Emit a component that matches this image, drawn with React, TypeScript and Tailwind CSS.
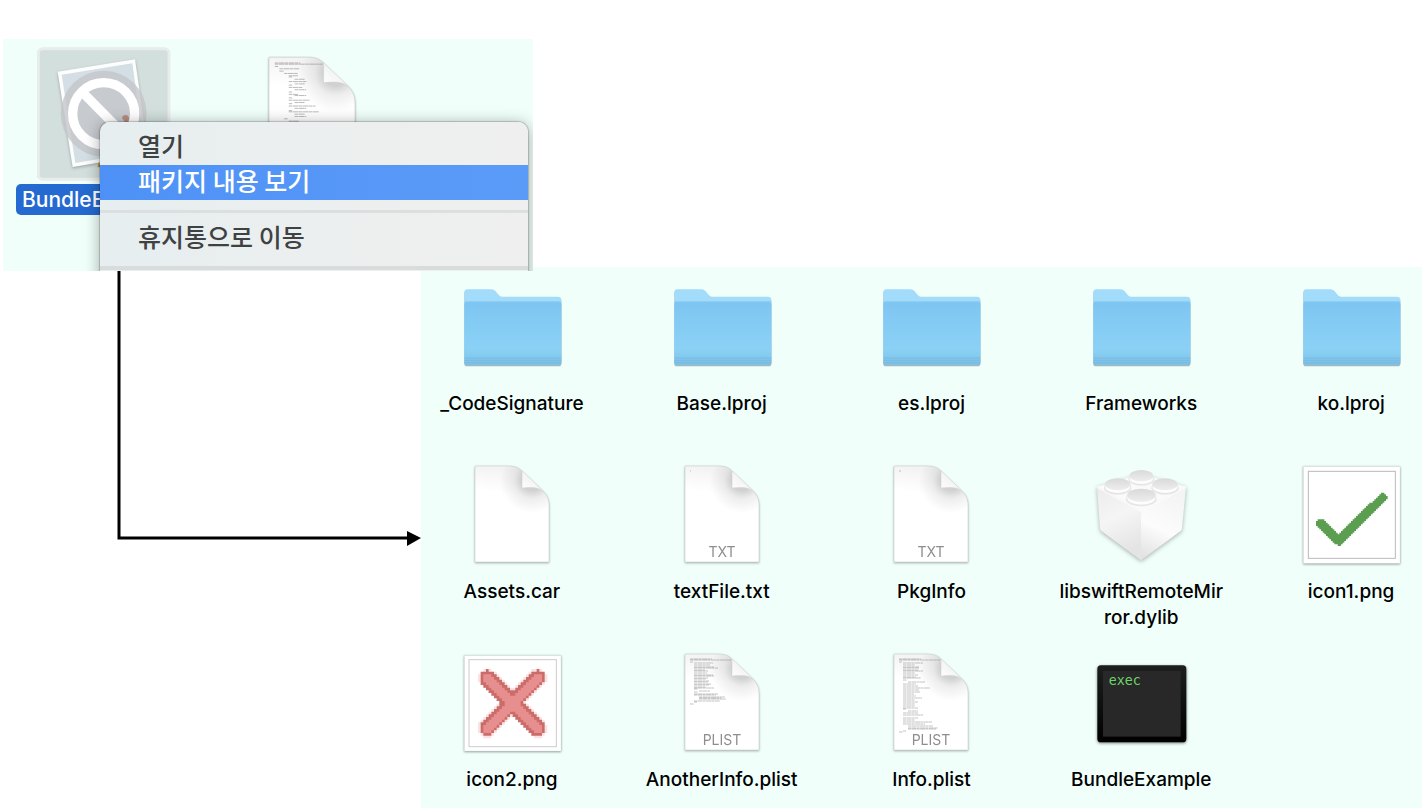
import { useId } from "react";
import type { ReactNode } from "react";

type Line = [x: number, y: number, w: number];
type Point = [x: number, y: number];

// ---- Text previews, in document units (74 x 96) ----
const HEADER: Line[] = [
  [5, 5, 22],
  [5, 6, 41],
  [5, 8, 3],
];

const ANOTHER_PLIST: Line[] = [
  ...HEADER,
  [9, 9, 19], [9, 11, 16], [9, 13, 20], [9, 14, 24], [9, 16, 11], [9, 17, 14],
  [9, 19, 13], [9, 21, 19], [9, 22, 20], [9, 24, 14], [9, 25, 12], [9, 27, 15],
  [9, 28, 14], [9, 30, 17], [9, 31, 15], [9, 33, 12], [9, 34, 20], [9, 35, 4],
  [14, 37, 11], [9, 38, 4], [9, 40, 24], [9, 41, 22], [14, 43, 26], [14, 44, 22],
  [14, 45, 27], [9, 47, 26], [9, 48, 3], [5, 50, 4],
];

const INFO_PLIST: Line[] = [
  ...HEADER,
  [9, 9, 20], [9, 11, 12], [9, 13, 16], [9, 14, 16], [9, 16, 15], [9, 17, 20],
  [9, 19, 12], [9, 21, 15], [9, 23, 13], [9, 24, 18], [9, 26, 4], [14, 28, 17],
  [9, 30, 13], [9, 32, 15], [9, 34, 27], [9, 36, 16], [9, 38, 17], [9, 40, 11],
  [9, 42, 13], [9, 44, 19], [9, 46, 12], [9, 48, 15], [9, 50, 12], [9, 52, 12],
  [9, 54, 15], [9, 55, 3], [14, 57, 10], [9, 59, 15], [9, 61, 20], [9, 64, 15],
  [9, 66, 12], [9, 68, 29], [9, 70, 22], [14, 72, 25], [14, 74, 30], [14, 75, 28],
  [9, 77, 3], [5, 78, 4],
];

const SOURCE_TEXT: Line[] = [
  ...HEADER,
  [9, 10, 17], [9, 12, 4], [13, 14, 12], [17, 16, 8], [17, 17, 3], [22, 19, 9],
  [17, 21, 15], [22, 23, 9], [17, 24, 3], [17, 26, 12], [22, 28, 10], [17, 30, 3],
  [17, 32, 8], [22, 33, 10], [17, 35, 3], [17, 37, 18], [22, 39, 9], [17, 40, 3],
  [17, 42, 23], [22, 44, 10], [17, 46, 3], [17, 47, 26], [22, 49, 9], [22, 51, 10],
  [13, 53, 3], [17, 55, 9],
];

// ---- Icons ----
function DocumentIcon({
  lines = [],
  tag,
  className = "size-[98px]",
}: {
  lines?: Line[];
  tag?: string;
  className?: string;
}) {
  const id = useId();
  const page = "M0 0H32C39 0 43 1 47 5L68 25C72 29 74 33 74 40V96H0Z";
  return (
    <svg viewBox="0 0 98 98" className={`overflow-visible ${className}`} aria-hidden="true">
      <defs>
        <linearGradient id={`${id}page`} x1="0.1" y1="0" x2="0" y2="1">
          <stop offset="0" stopColor="#f3f3f3" />
          <stop offset="0.25" stopColor="#ffffff" />
        </linearGradient>
        <radialGradient id={`${id}shade`} gradientUnits="userSpaceOnUse" cx="57" cy="15" r="32">
          <stop offset="0.3" stopColor="#000000" stopOpacity="0.17" />
          <stop offset="0.55" stopColor="#000000" stopOpacity="0.07" />
          <stop offset="1" stopColor="#000000" stopOpacity="0" />
        </radialGradient>
        <linearGradient id={`${id}fold`} x1="0" y1="1" x2="0.6" y2="0.3">
          <stop offset="0" stopColor="#ffffff" />
          <stop offset="1" stopColor="#f1f1f1" />
        </linearGradient>
      </defs>
      <g transform="translate(12 1)" className="[filter:drop-shadow(0_1px_1px_rgba(0,0,0,0.3))]">
        <path d={page} fill={`url(#${id}page)`} />
        <path d={page} fill={`url(#${id}shade)`} stroke="#c2cac8" strokeWidth="0.5" />
        {lines.map(([x, y, w]) => (
          <path
            key={`${x}-${y}`}
            d={`M${x} ${y}h${w}`}
            stroke="#666666"
            strokeWidth="0.7"
            strokeDasharray="3 0.4 5 0.3"
            opacity="0.55"
          />
        ))}
        <path d="M47 5V22C56 21 63 21 68 25Z" fill={`url(#${id}fold)`} />
        <path d="M47 5V22C56 21 63 21 68 25" fill="none" stroke="#cfcfcf" strokeWidth="0.5" />
        {tag && (
          <text
            x="37"
            y="91"
            textAnchor="middle"
            fontSize="14"
            fill="#8e8e8e"
            className="font-['Inter',sans-serif]"
          >
            {tag}
          </text>
        )}
      </g>
    </svg>
  );
}

function FolderIcon() {
  const id = useId();
  return (
    <svg viewBox="99 -12 294 294" className="size-[98px] overflow-visible" aria-hidden="true">
      <defs>
        <linearGradient id={id} x1="0" y1="0" x2="0" y2="1">
          <stop offset="0" stopColor="#7dc5f1" />
          <stop offset="0.45" stopColor="#86cdf5" />
          <stop offset="0.75" stopColor="#8bd1f6" />
          <stop offset="1" stopColor="#7cc0e6" />
        </linearGradient>
      </defs>
      <g className="[filter:drop-shadow(0_3px_2px_rgba(0,0,0,0.28))]">
        <path
          d="M103 35Q103 25 113 25H184Q192 25 197 31L207 43Q210 47 216 47H384Q394 47 394 57V240H103Z"
          fill="#a3dcfb"
        />
        <path
          d="M103 70Q103 60 113 60H384Q394 60 394 70V245Q394 253 386 253H111Q103 253 103 245Z"
          fill={`url(#${id})`}
        />
        <path d="M106 62H391" stroke="#8fd0f5" strokeWidth="3" />
        <path d="M103 231H394M103 238H394M103 245H394" stroke="#69add5" strokeWidth="2" opacity="0.7" />
      </g>
    </svg>
  );
}

function Stud({ cx, cy, rx, ry, fill }: { cx: number; cy: number; rx: number; ry: number; fill: string }) {
  return (
    <g>
      <ellipse cx={cx} cy={cy + 12} rx={rx + 3} ry={ry + 1} fill="#d6d6d6" opacity="0.5" />
      <path
        d={`M${cx - rx} ${cy}v9a${rx} ${ry} 0 0 0 ${rx * 2} 0v-9Z`}
        fill="#fdfdfd"
        stroke="#d2d2d2"
        strokeWidth="1"
      />
      <ellipse cx={cx} cy={cy} rx={rx} ry={ry} fill={fill} />
    </g>
  );
}

function BrickIcon() {
  const id = useId();
  return (
    <svg viewBox="156 42 294 294" className="size-[98px] overflow-visible" aria-hidden="true">
      <defs>
        <linearGradient id={`${id}left`} x1="0" y1="0" x2="0.3" y2="1">
          <stop offset="0" stopColor="#ececec" />
          <stop offset="0.5" stopColor="#f5f5f5" />
          <stop offset="1" stopColor="#e4e4e4" />
        </linearGradient>
        <linearGradient id={`${id}right`} x1="0.5" y1="0" x2="0.2" y2="1">
          <stop offset="0" stopColor="#f4f4f4" />
          <stop offset="0.55" stopColor="#fcfcfc" />
          <stop offset="1" stopColor="#e2e2e2" />
        </linearGradient>
        <linearGradient id={`${id}stud`} x1="0" y1="0" x2="0" y2="1">
          <stop offset="0" stopColor="#d9d9d9" />
          <stop offset="1" stopColor="#eeeeee" />
        </linearGradient>
      </defs>
      <g className="[filter:drop-shadow(0_4px_6px_rgba(0,0,0,0.3))]">
        <path d="M171 107L290 72Q303 68 316 72L438 107L303 180Z" fill="#fafafa" />
        <path d="M171 107L303 180V328L184 240Q180 237 180 231Z" fill={`url(#${id}left)`} />
        <path d="M438 107L303 180V328L422 240Q426 237 426 231Z" fill={`url(#${id}right)`} />
        <path d="M172 109L303 181L437 109" fill="none" stroke="#ffffff" strokeWidth="3" />
      </g>
      <Stud cx={304} cy={74} rx={36} ry={17} fill={`url(#${id}stud)`} />
      <Stud cx={233} cy={100} rx={38} ry={18} fill={`url(#${id}stud)`} />
      <Stud cx={375} cy={100} rx={38} ry={18} fill={`url(#${id}stud)`} />
      <Stud cx={304} cy={133} rx={43} ry={20} fill={`url(#${id}stud)`} />
    </svg>
  );
}

function distance([px, py]: Point, [ax, ay]: Point, [bx, by]: Point) {
  const dx = bx - ax;
  const dy = by - ay;
  const t = Math.max(0, Math.min(1, ((px - ax) * dx + (py - ay) * dy) / (dx * dx + dy * dy)));
  return Math.hypot(px - ax - t * dx, py - ay - t * dy);
}

// Rasterises thick strokes onto a coarse grid and returns one path of squares.
function pixelPath(segments: [Point, Point][], cell: number, radius: number) {
  let d = "";
  for (let y = 60; y < 330; y += cell) {
    for (let x = 60; x < 360; x += cell) {
      const center: Point = [x + cell / 2, y + cell / 2];
      if (segments.some(([a, b]) => distance(center, a, b) < radius)) {
        d += `M${x} ${y}h${cell}v${cell}h-${cell}Z`;
      }
    }
  }
  return d;
}

const CHECK: [Point, Point][] = [
  [[120, 218], [174, 270]],
  [[174, 270], [305, 140]],
];
const CROSS: [Point, Point][] = [
  [[112, 111], [263, 262]],
  [[263, 111], [112, 262]],
];

function CheckPictureIcon() {
  return (
    <svg viewBox="63 42 294 294" className="size-[98px] overflow-visible" aria-hidden="true">
      <rect
        x="67" y="47" width="290" height="290" fill="#ffffff" stroke="#d3dad8" strokeWidth="1"
        className="[filter:drop-shadow(0_2px_3px_rgba(0,0,0,0.45))]"
      />
      <rect x="82" y="61" width="261" height="261" fill="none" stroke="#b9b9b9" strokeWidth="3" />
      <path d={pixelPath(CHECK, 5, 14)} fill="#5b9e50" />
    </svg>
  );
}

function CrossPictureIcon() {
  return (
    <svg viewBox="39 36 294 294" className="size-[98px] overflow-visible" aria-hidden="true">
      <rect
        x="43" y="44" width="290" height="286" fill="#ffffff" stroke="#d3dad8" strokeWidth="1"
        className="[filter:drop-shadow(0_2px_3px_rgba(0,0,0,0.45))]"
      />
      <rect x="57" y="56" width="262" height="261" fill="none" stroke="#cccccc" strokeWidth="3" />
      <path d={pixelPath(CROSS, 8, 28)} fill="#f8e2e2" />
      <path d={pixelPath(CROSS, 8, 24)} fill="#cc6c6a" />
      <path d={pixelPath(CROSS, 8, 14)} fill="#e68f8e" />
    </svg>
  );
}

function ExecutableIcon() {
  const id = useId();
  return (
    <svg viewBox="93 36 294 294" className="size-[98px] overflow-visible" aria-hidden="true">
      <defs>
        <linearGradient id={id} x1="0" y1="0" x2="0" y2="1">
          <stop offset="0" stopColor="#1d1f1f" />
          <stop offset="1" stopColor="#000000" />
        </linearGradient>
      </defs>
      <rect
        x="109" y="73" width="267" height="231" rx="11" fill={`url(#${id})`}
        className="[filter:drop-shadow(0_3px_4px_rgba(0,0,0,0.5))]"
      />
      <rect x="126" y="90" width="233" height="197" fill="#282828" />
      <text x="143" y="131" fontSize="40" fill="#6bd46a" className="font-['DejaVu_Sans_Mono',monospace]">
        exec
      </text>
    </svg>
  );
}

function BrokenAppIcon() {
  return (
    <svg viewBox="111 48 402 402" className="size-[134px]" aria-hidden="true">
      <rect x="115" y="53" width="392" height="392" rx="13" fill="#d2dfdc" stroke="#e8eceb" strokeWidth="9" />
      <path
        d="M173 122L405 85L446 370L218 408Z"
        fill="#fdfdfd"
        className="[filter:drop-shadow(0_4px_4px_rgba(0,0,0,0.25))]"
      />
      <path d="M185 131L397 97L434 361L226 396Z" fill="#d3dfe5" />
      <circle cx="311" cy="248" r="129" fill="#c4c6c9" opacity="0.8" />
      <g fill="none" stroke="#ffffff" strokeWidth="28">
        <circle cx="311" cy="248" r="93" />
        <path d="M249 185L373 311" />
      </g>
      <path d="M366 261Q367 252 377 252Q388 253 387 264L384 276H376Z" fill="#b58e84" />
      <path d="M292 409L297 393L303 408Z" fill="#b58a3c" />
    </svg>
  );
}

// ---- Package contents ----
const FILES: { name: string; icon: ReactNode }[] = [
  { name: "_CodeSignature", icon: <FolderIcon /> },
  { name: "Base.lproj", icon: <FolderIcon /> },
  { name: "es.lproj", icon: <FolderIcon /> },
  { name: "Frameworks", icon: <FolderIcon /> },
  { name: "ko.lproj", icon: <FolderIcon /> },
  { name: "Assets.car", icon: <DocumentIcon /> },
  { name: "textFile.txt", icon: <DocumentIcon tag="TXT" lines={[[5, 5, 1]]} /> },
  { name: "PkgInfo", icon: <DocumentIcon tag="TXT" lines={[[5, 5, 2]]} /> },
  { name: "libswiftRemoteMirror.dylib", icon: <BrickIcon /> },
  { name: "icon1.png", icon: <CheckPictureIcon /> },
  { name: "icon2.png", icon: <CrossPictureIcon /> },
  { name: "AnotherInfo.plist", icon: <DocumentIcon tag="PLIST" lines={ANOTHER_PLIST} /> },
  { name: "Info.plist", icon: <DocumentIcon tag="PLIST" lines={INFO_PLIST} /> },
  { name: "BundleExample", icon: <ExecutableIcon /> },
];

function PackageContents() {
  return (
    <section className="min-w-0 flex-1 overflow-hidden bg-[#f0fffa] pt-[10px] pb-[15px]">
      <ul className="-mr-[34px] -ml-[14px] grid grid-cols-5 grid-rows-[188px_188px_auto]">
        {FILES.map((file) => (
          <li key={file.name} className="flex flex-col items-center gap-4">
            {file.icon}
            <span className="max-w-[168px] text-center text-[19px] leading-[26px] font-medium break-all text-black">
              {file.name}
            </span>
          </li>
        ))}
      </ul>
    </section>
  );
}

// ---- Context menu ----
function MenuItem({ children, active = false }: { children: ReactNode; active?: boolean }) {
  return (
    <button
      type="button"
      role="menuitem"
      className={`flex h-[35px] w-full items-start pl-[38px] text-left text-[25px] leading-[30px] font-medium font-['Noto_Sans_CJK_KR',sans-serif] ${
        active ? "bg-linear-to-r from-[#4e91f6] to-[#5b9bf8] text-white" : "text-[#3f4243]"
      }`}
    >
      {children}
    </button>
  );
}

function ContextMenu() {
  return (
    <div
      role="menu"
      className="absolute top-[83px] right-[5px] left-[97px] h-[170px] rounded-t-[10px] bg-linear-to-r from-[#e6eeef] via-[#ecefef] to-[#efefef] pt-2 shadow-[0_2px_16px_rgba(0,0,0,0.35),0_0_1px_1px_rgba(0,0,0,0.18)]"
    >
      <MenuItem>열기</MenuItem>
      <MenuItem active>패키지 내용 보기</MenuItem>
      <hr className="mt-[10px] mb-2 border-t-[3px] border-[#dbdfdf]" />
      <MenuItem>휴지통으로 이동</MenuItem>
      <hr className="mt-[10px] border-t-4 border-[#d8dcdc]" />
    </div>
  );
}

function BundleSelection() {
  return (
    <section className="relative z-10 ml-[3px] flex h-[232px] w-[530px] overflow-hidden bg-[#f0fffa] pt-2">
      <div className="flex w-[202px] flex-col items-center gap-[3px]">
        <BrokenAppIcon />
        {/* the name runs on under the menu, so only its start is set */}
        <span className="ml-[13px] self-start rounded-[5px] bg-[#246ad1] px-[6px] text-[21px] leading-[31px] font-medium text-white">
          BundleE
        </span>
      </div>
      <div className="flex w-[214px] justify-center pt-[9px]">
        <DocumentIcon lines={SOURCE_TEXT} className="size-[114px]" />
      </div>
      <ContextMenu />
    </section>
  );
}

function Arrow() {
  return (
    <svg viewBox="0 0 421 541" className="h-[541px] w-[421px] shrink-0 self-start" aria-hidden="true">
      <path d="M119 0V271H408" fill="none" stroke="#000000" strokeWidth="3" />
      <path d="M407 264L421 271L407 279Z" fill="#000000" />
    </svg>
  );
}

export default function App() {
  return (
    <main className="min-h-screen bg-white pt-[39px] font-['Inter',sans-serif]">
      <BundleSelection />
      <div className="-mt-1 flex">
        <Arrow />
        <PackageContents />
      </div>
    </main>
  );
}
